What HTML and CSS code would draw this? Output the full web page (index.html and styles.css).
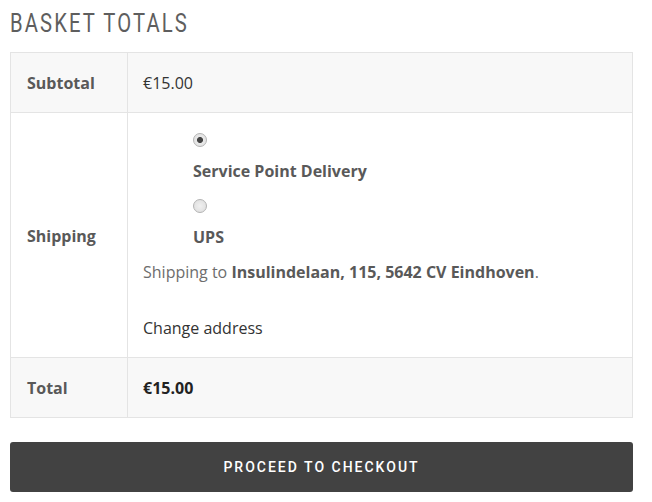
FILE: index.html
```html
<!DOCTYPE html>
<html lang="en">
<head>
    <meta charset="UTF-8">
    <meta name="viewport" content="width=device-width, initial-scale=1.0">
    <title>Basket Totals</title>
    <link rel="stylesheet" href="styles.css">
</head>
<body>
    <div class="cart-totals">
        <h2><span class="condensed">Basket totals</span></h2>
        <table class="totals">
            <tr class="row-alt">
                <th>Subtotal</th>
                <td>€15.00</td>
            </tr>
            <tr>
                <th>Shipping</th>
                <td>
                    <ul class="methods">
                        <li>
                            <input type="radio" name="method" id="method-sp" checked>
                            <label for="method-sp">Service Point Delivery</label>
                        </li>
                        <li>
                            <input type="radio" name="method" id="method-ups">
                            <label for="method-ups">UPS</label>
                        </li>
                    </ul>
                    <p class="destination">Shipping to <strong>Insulindelaan, 115, 5642 CV Eindhoven</strong>.</p>
                    <a class="change-address" href="#">Change address</a>
                </td>
            </tr>
            <tr class="row-alt">
                <th>Total</th>
                <td><strong class="amount">€15.00</strong></td>
            </tr>
        </table>
        <a class="checkout-btn" href="#"><span class="condensed">Proceed to checkout</span></a>
    </div>
</body>
</html>
```

FILE: styles.css
```css
body { margin: 0; padding: 10px 10px 0; background: #fff; font-family: "Open Sans", sans-serif; font-size: 16px; color: #6d6d6d; }
.cart-totals { width: 623px; }
.condensed { display: inline-block; }
h2 { margin: 0 0 14px; height: 28px; font-family: Roboto, sans-serif; font-weight: 400; font-size: 25px; line-height: 28px; letter-spacing: 2.6px; text-transform: uppercase; color: #5e5e5e; white-space: nowrap; }
h2 .condensed { transform: scaleX(0.81); transform-origin: 0 50%; }
.totals { width: 623px; border-collapse: collapse; margin-bottom: 24px; }
.totals th, .totals td { border: 1px solid #e4e4e4; padding: 17px 16px 16px; line-height: 26px; text-align: left; vertical-align: middle; }
.totals th { width: 84px; font-weight: 700; color: #595959; }
.totals td { color: #333; padding-left: 15px; }
.row-alt th, .row-alt td { background: #f8f8f8; }
.methods { list-style: none; margin: 0 0 9px; padding-left: 50px; }
.methods li { display: flex; flex-direction: column; align-items: flex-start; }
.methods li + li { margin-top: 12px; }
.methods input { appearance: none; -webkit-appearance: none; width: 14px; height: 14px; margin: 3px 0 3px; border: 1px solid #b4b4b4; border-radius: 50%; background: radial-gradient(circle, #f0f0f0 0, #dcdcdc 100%); box-sizing: border-box; }
.methods input:checked { background: radial-gradient(circle, #444 0, #444 2.6px, #e8e8e8 3.4px, #e0e0e0 100%); }
.methods label { margin-top: 8px; line-height: 26px; font-weight: 700; color: #595959; }
.destination { margin: 0 0 30px; color: #6d6d6d; }
.destination strong { color: #595959; }
.change-address { display: block; color: #333; text-decoration: none; line-height: 26px; }
.amount { color: #222; }
.checkout-btn { display: block; width: 623px; height: 50px; line-height: 50px; background: #424242; color: #fff; text-align: center; border-radius: 3px; text-decoration: none; text-transform: uppercase; font-family: Roboto, sans-serif; font-weight: 500; font-size: 14px; letter-spacing: 2px; }
```
